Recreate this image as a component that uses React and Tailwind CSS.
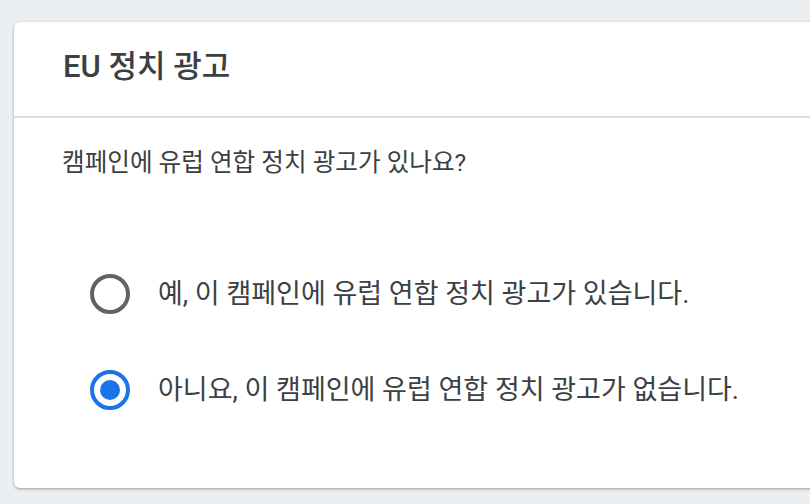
export default function App() {
  return (
    <div
      className="w-[810px] h-[504px] overflow-hidden bg-[#eceff1] pt-[22px] pl-[14px]"
      style={{ fontFamily: 'Roboto, "Noto Sans CJK KR", sans-serif' }}
    >
      <div className="w-[820px] h-[466px] bg-white rounded-[6px] shadow-[0_1px_3px_rgba(0,0,0,0.35)]">
        <div className="h-[96px] border-b-2 border-[#dadce0] pl-[49px] flex items-center">
          <h1 className="text-[31px] leading-[40px] font-medium text-[#3c4043] -mt-[4px]">EU 정치 광고</h1>
        </div>
        <p className="pl-[48px] pt-[29px] text-[24.6px] leading-[32px] text-[#3c4043]">
          캠페인에 유럽 연합 정치 광고가 있나요?
        </p>
        <div className="pl-[76px] pt-[95px] flex flex-col gap-[56px]">
          <label className="flex items-center gap-[28px] h-[40px]">
            <span className="w-[40px] h-[40px] shrink-0 rounded-full border-[4px] border-[#5f6368]" />
            <span className="text-[27px] leading-[36px] text-[#3c4043]">
              예, 이 캠페인에 유럽 연합 정치 광고가 있습니다.
            </span>
          </label>
          <label className="flex items-center gap-[28px] h-[40px]">
            <span className="w-[40px] h-[40px] shrink-0 rounded-full border-[4px] border-[#1a73e8] flex items-center justify-center">
              <span className="w-[20px] h-[20px] rounded-full bg-[#1a73e8]" />
            </span>
            <span className="text-[27px] leading-[36px] text-[#3c4043]">
              아니요, 이 캠페인에 유럽 연합 정치 광고가 없습니다.
            </span>
          </label>
        </div>
      </div>
    </div>
  );
}
